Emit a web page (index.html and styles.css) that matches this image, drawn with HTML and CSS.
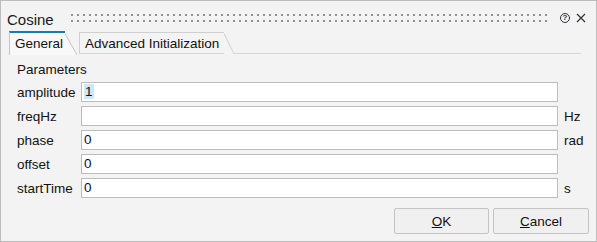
FILE: index.html
```html
<!DOCTYPE html>
<html lang="en">
<head>
    <meta charset="UTF-8">
    <title>Cosine</title>
    <link rel="stylesheet" href="styles.css">
</head>
<body>
    <div class="dialog">
        <div class="titlebar">
            <span class="title">Cosine</span>
            <span class="grip"></span>
            <span class="help">?</span>
            <svg class="close" width="10" height="10" viewBox="0 0 10 10">
                <path d="M1 1 L9 9 M9 1 L1 9" stroke="#333" stroke-width="1.2" fill="none"/>
            </svg>
        </div>

        <div class="tabs">
            <div class="tab active">
                <span class="tab-label">General</span>
                <svg class="slant" width="12" height="23" viewBox="0 0 12 23">
                    <polygon points="0,2 12,23 0,23" fill="#f8f8f8"/>
                    <line x1="0" y1="1.5" x2="12" y2="23" stroke="#c4c4c4" stroke-width="1"/>
                </svg>
            </div>
            <div class="tab">
                <span class="tab-label">Advanced Initialization</span>
                <svg class="slant" width="10" height="21" viewBox="0 0 10 21">
                    <polygon points="0,0 10,21 0,21" fill="#f4f4f4"/>
                    <line x1="0" y1="0.5" x2="10" y2="21" stroke="#cfcfcf" stroke-width="1"/>
                </svg>
            </div>
            <div class="tab-rest"></div>
        </div>

        <div class="panel">
            <div class="group-title">Parameters</div>
            <div class="params">
                <span class="label">amplitude</span>
                <div class="field"><span class="selected">1</span></div>
                <span class="unit"></span>

                <span class="label">freqHz</span>
                <div class="field"></div>
                <span class="unit">Hz</span>

                <span class="label">phase</span>
                <div class="field">0</div>
                <span class="unit">rad</span>

                <span class="label">offset</span>
                <div class="field">0</div>
                <span class="unit"></span>

                <span class="label">startTime</span>
                <div class="field">0</div>
                <span class="unit">s</span>
            </div>
        </div>

        <div class="buttons">
            <button class="btn btn-ok"><u>O</u>K</button>
            <button class="btn btn-cancel"><u>C</u>ancel</button>
        </div>
    </div>
</body>
</html>
```

FILE: styles.css
```css
body {
    margin: 0;
    font-family: "Liberation Sans", Arial, sans-serif;
    font-size: 13.5px;
    color: #111;
}
.dialog {
    width: 597px;
    height: 242px;
    box-sizing: border-box;
    border: 1px solid #bdbdbd;
    background-color: #f3f3f3;
    display: flex;
    flex-direction: column;
}
.titlebar {
    display: flex;
    align-items: center;
    height: 22px;
    margin-top: 7px;
    padding-left: 6px;
    padding-right: 10px;
}
.title {
    font-size: 15px;
    color: #1a1a1a;
}
.grip {
    flex: 1;
    height: 12px;
    margin-left: 15px;
    margin-right: 9px;
    margin-top: -2px;
    background-image: radial-gradient(circle, #8e8e8e 0.8px, transparent 1.3px);
    background-size: 6px 6px;
}
.help {
    width: 8px;
    height: 8px;
    border: 1.2px solid #333;
    border-radius: 50%;
    font-size: 8px;
    font-weight: bold;
    line-height: 8px;
    text-align: center;
    color: #333;
    margin-top: -2px;
}
.close {
    margin-left: 6px;
    margin-top: -2px;
}
.tabs {
    display: flex;
    align-items: flex-end;
    height: 23px;
    margin-top: 1px;
    padding-left: 8px;
    padding-right: 15px;
}
.tab {
    display: flex;
    align-items: flex-end;
    height: 21px;
    margin-left: 2px;
    border-bottom: 1px solid #d8d8d8;
}
.tab-label {
    display: flex;
    align-items: center;
    height: 20px;
    padding-left: 5px;
    padding-right: 5px;
    border-left: 1px solid #cfcfcf;
    border-top: 1px solid #cfcfcf;
    background-color: #f4f4f4;
}
.tab.active {
    height: 24px;
    margin-left: 0;
    margin-bottom: -1px;
    border-bottom: none;
}
.tab.active .tab-label {
    height: 21px;
    padding-right: 2px;
    border-left-color: #c4c4c4;
    border-top: 2px solid #167cb3;
    background-color: #f8f8f8;
    padding-bottom: 1px;
}
.tab.active .slant {
    margin-bottom: 0;
}
.slant {
    display: block;
    margin-bottom: -1px;
    position: relative;
    z-index: 1;
}
.tab-rest {
    flex: 1;
    align-self: flex-end;
    border-bottom: 1px solid #d8d8d8;
    margin-left: -1px;
}
.panel {
    padding: 8px 0 0 16px;
}
.group-title {
    line-height: 16px;
    margin-bottom: 4px;
}
.params {
    display: grid;
    grid-template-columns: 64px 477px auto;
    row-gap: 4px;
    align-items: center;
}
.field {
    height: 20px;
    box-sizing: border-box;
    border: 1px solid #bcbcbc;
    background-color: #fff;
    padding-left: 2px;
    line-height: 18px;
}
.selected {
    background-color: #cce8ff;
    padding: 0 1px;
}
.unit {
    padding-left: 6px;
}
.buttons {
    display: flex;
    justify-content: flex-end;
    gap: 4px;
    margin-top: 10px;
    padding-right: 7px;
}
.btn {
    height: 26px;
    font-family: "Liberation Sans", Arial, sans-serif;
    font-size: 13.5px;
    color: #111;
    background-color: #f0f0f0;
    border: 1px solid #c4c4c4;
    border-radius: 2px;
    padding: 0;
}
.btn-ok {
    width: 95px;
}
.btn-cancel {
    width: 96px;
}
```
